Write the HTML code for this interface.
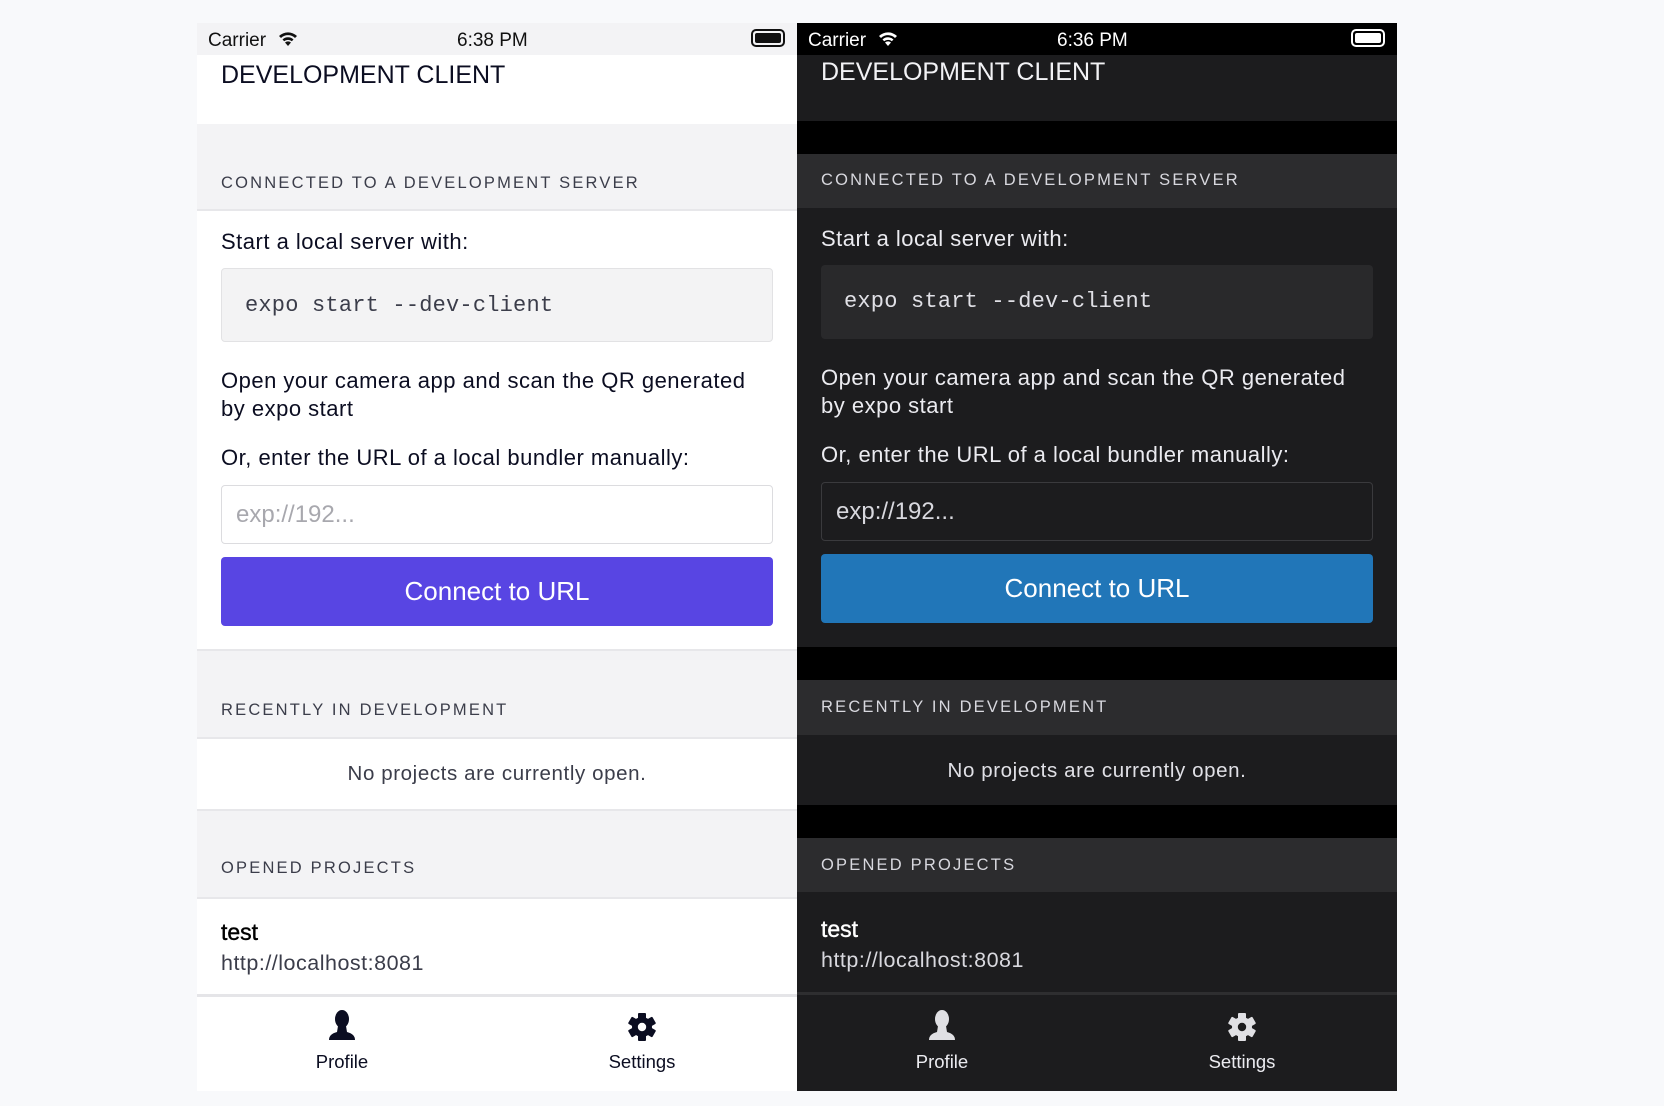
<!DOCTYPE html>
<html><head><meta charset="utf-8"><style>
*{margin:0;padding:0;box-sizing:border-box}
body{width:1664px;height:1106px;background:#f8f9fb;position:relative;overflow:hidden;font-family:"Liberation Sans",sans-serif}
.p{position:absolute;top:23px;width:600px;height:1068px;overflow:hidden}
.a{position:absolute}
.t{position:absolute;left:24px;white-space:nowrap}
.sb{font-size:19px;top:7px}
.hd{font-size:16.5px;letter-spacing:2.2px}
.bd{font-size:22px;letter-spacing:.5px}
.code{position:absolute;left:24px;width:552px;height:74px;border-radius:4px;font-family:"Liberation Mono",monospace;font-size:22px;padding:24px 0 0 23px;letter-spacing:.2px}
.inp{position:absolute;left:24px;width:552px;height:59px;border-radius:4px;font-size:24px;padding:15px 0 0 14px}
.btn{position:absolute;left:24px;width:552px;height:69px;border-radius:4px;font-size:26px;color:#fff;text-align:center;line-height:69px}
.tab{position:absolute;font-size:18.5px;width:200px;text-align:center}
</style></head><body>

<!-- LIGHT -->
<div class="p" style="left:197px;background:#fff;color:#0b0d21">
 <div class="a" style="top:0;left:0;width:600px;height:32px;background:#f3f3f5"></div>
 <div class="t sb" style="left:11px;color:#111">Carrier</div>
 <svg class="a" style="left:79px;top:6px" width="24" height="18" viewBox="0 0 24 18"><path d="M12 17 L15 13.5 A5 5 0 0 0 9 13.5Z M3 7 A13 13 0 0 1 21 7 L19 9 A10 10 0 0 0 5 9Z M6.5 10.5 A8 8 0 0 1 17.5 10.5 L15.8 12.3 A5.6 5.6 0 0 0 8.2 12.3Z" fill="#111"/></svg>
 <div class="t sb" style="left:260px;color:#111">6:38 PM</div>
 <div class="a" style="left:554px;top:6px;width:34px;height:18px;border:2px solid #111;border-radius:5px;padding:2px"><div style="width:100%;height:100%;background:#111;border-radius:2px"></div></div>
 <div class="t" style="top:38px;font-size:25px">DEVELOPMENT CLIENT</div>
 <div class="a" style="top:101px;left:0;width:600px;height:87px;background:#f3f3f5;border-bottom:2px solid #e7e7ea"></div>
 <div class="t hd" style="top:151px;color:#3b3d4a">CONNECTED TO A DEVELOPMENT SERVER</div>
 <div class="t bd" style="top:206px">Start a local server with:</div>
 <div class="code" style="top:245px;background:#f3f3f4;border:1px solid #e2e2e4;color:#3b3d4a">expo start --dev-client</div>
 <div class="t bd" style="top:344px;line-height:28px">Open your camera app and scan the QR generated<br>by expo start</div>
 <div class="t bd" style="top:422px">Or, enter the URL of a local bundler manually:</div>
 <div class="inp" style="top:462px;border:1px solid #dcdcdf;color:#a8a8ae">exp://192...</div>
 <div class="btn" style="top:534px;background:#5845e3">Connect to URL</div>
 <div class="a" style="top:626px;left:0;width:600px;height:90px;background:#f3f3f5;border-top:2px solid #e7e7ea;border-bottom:2px solid #e7e7ea"></div>
 <div class="t hd" style="top:678px;color:#3b3d4a">RECENTLY IN DEVELOPMENT</div>
 <div class="a bd" style="top:739px;left:0;width:600px;text-align:center;font-size:20.5px;color:#3b3d4a;letter-spacing:.6px">No projects are currently open.</div>
 <div class="a" style="top:786px;left:0;width:600px;height:90px;background:#f3f3f5;border-top:2px solid #e7e7ea;border-bottom:2px solid #e7e7ea"></div>
 <div class="t hd" style="top:836px;color:#3b3d4a">OPENED PROJECTS</div>
 <div class="t" style="top:896px;font-size:23px;color:#000;-webkit-text-stroke:.4px #000">test</div>
 <div class="t bd" style="top:928px;font-size:21.5px;color:#3b3d4a">http://localhost:8081</div>
 <div class="a" style="top:971px;left:0;width:600px;height:3px;background:#e5e5e8"></div>
 <svg class="a" style="left:130px;top:987px" width="30" height="32" viewBox="0 0 30 32"><ellipse cx="15" cy="9" rx="7" ry="9" fill="#0b0d21"/><path d="M11 16 L19 16 L20 22 Q28 24 28 30 L2 30 Q2 24 10 22Z" fill="#0b0d21"/></svg>
 <div class="tab" style="left:45px;top:1028px">Profile</div>
 <svg class="a" style="left:430px;top:989px" width="30" height="30" viewBox="-15 -15 30 30"><g fill="#0b0d21"><circle r="10"/><rect x="-4" y="-14" width="8" height="28" rx="1"/><rect x="-4" y="-14" width="8" height="28" rx="1" transform="rotate(60)"/><rect x="-4" y="-14" width="8" height="28" rx="1" transform="rotate(120)"/></g><circle r="4.2" fill="#fff"/></svg>
 <div class="tab" style="left:345px;top:1028px">Settings</div>
</div>

<!-- DARK -->
<div class="p" style="left:797px;background:#1c1c1e;color:#ebebf0">
 <div class="a" style="top:0;left:0;width:600px;height:32px;background:#000"></div>
 <div class="t sb" style="left:11px;color:#fff">Carrier</div>
 <svg class="a" style="left:79px;top:6px" width="24" height="18" viewBox="0 0 24 18"><path d="M12 17 L15 13.5 A5 5 0 0 0 9 13.5Z M3 7 A13 13 0 0 1 21 7 L19 9 A10 10 0 0 0 5 9Z M6.5 10.5 A8 8 0 0 1 17.5 10.5 L15.8 12.3 A5.6 5.6 0 0 0 8.2 12.3Z" fill="#fff"/></svg>
 <div class="t sb" style="left:260px;color:#fff">6:36 PM</div>
 <div class="a" style="left:554px;top:6px;width:34px;height:18px;border:2px solid #fff;border-radius:5px;padding:2px"><div style="width:100%;height:100%;background:#fff;border-radius:2px"></div></div>
 <div class="t" style="top:35px;font-size:25px;color:#f2f2f5">DEVELOPMENT CLIENT</div>
 <div class="a" style="top:98px;left:0;width:600px;height:33px;background:#000"></div>
 <div class="a" style="top:131px;left:0;width:600px;height:54px;background:#2c2c2e"></div>
 <div class="t hd" style="top:148px;color:#d8d8de">CONNECTED TO A DEVELOPMENT SERVER</div>
 <div class="t bd" style="top:203px">Start a local server with:</div>
 <div class="code" style="top:242px;background:#29292b;color:#e0e0e6">expo start --dev-client</div>
 <div class="t bd" style="top:341px;line-height:28px">Open your camera app and scan the QR generated<br>by expo start</div>
 <div class="t bd" style="top:419px">Or, enter the URL of a local bundler manually:</div>
 <div class="inp" style="top:459px;border:1px solid #3a3a3d;color:#d8d8de">exp://192...</div>
 <div class="btn" style="top:531px;background:#2176b8">Connect to URL</div>
 <div class="a" style="top:624px;left:0;width:600px;height:33px;background:#000"></div>
 <div class="a" style="top:657px;left:0;width:600px;height:55px;background:#2c2c2e"></div>
 <div class="t hd" style="top:675px;color:#d8d8de">RECENTLY IN DEVELOPMENT</div>
 <div class="a bd" style="top:736px;left:0;width:600px;text-align:center;font-size:20.5px;color:#e0e0e6;letter-spacing:.6px">No projects are currently open.</div>
 <div class="a" style="top:782px;left:0;width:600px;height:33px;background:#000"></div>
 <div class="a" style="top:815px;left:0;width:600px;height:54px;background:#2c2c2e"></div>
 <div class="t hd" style="top:833px;color:#d8d8de">OPENED PROJECTS</div>
 <div class="t" style="top:893px;font-size:23px;color:#fff;-webkit-text-stroke:.4px #fff">test</div>
 <div class="t bd" style="top:925px;font-size:21.5px;color:#d8d8de">http://localhost:8081</div>
 <div class="a" style="top:969px;left:0;width:600px;height:3px;background:#2e2e30"></div>
 <svg class="a" style="left:130px;top:987px" width="30" height="32" viewBox="0 0 30 32"><ellipse cx="15" cy="9" rx="7" ry="9" fill="#e0e0e4"/><path d="M11 16 L19 16 L20 22 Q28 24 28 30 L2 30 Q2 24 10 22Z" fill="#e0e0e4"/></svg>
 <div class="tab" style="left:45px;top:1028px">Profile</div>
 <svg class="a" style="left:430px;top:989px" width="30" height="30" viewBox="-15 -15 30 30"><g fill="#e0e0e4"><circle r="10"/><rect x="-4" y="-14" width="8" height="28" rx="1"/><rect x="-4" y="-14" width="8" height="28" rx="1" transform="rotate(60)"/><rect x="-4" y="-14" width="8" height="28" rx="1" transform="rotate(120)"/></g><circle r="4.2" fill="#1c1c1e"/></svg>
 <div class="tab" style="left:345px;top:1028px">Settings</div>
</div>
</body></html>
